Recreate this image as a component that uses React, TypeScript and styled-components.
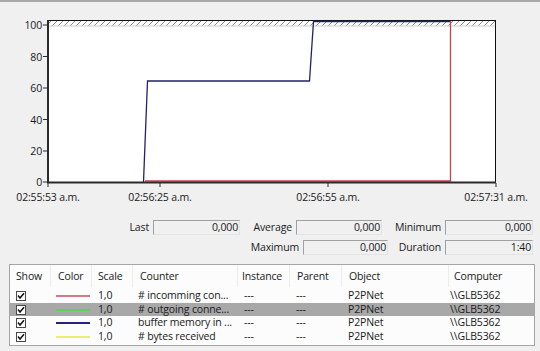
import React from "react";
import styled, { createGlobalStyle } from "styled-components";

const GlobalStyle = createGlobalStyle`
  html, body {
    margin: 0;
    padding: 0;
    background: #f0f0f0;
  }
  body {
    font-family: "Segoe UI", "Open Sans", "Noto Sans", sans-serif;
    font-size: 10.5px;
    letter-spacing: -0.15px;
    color: #1a1a1a;
  }
`;

export const Window = styled.div`
  width: 540px;
  height: 351px;
  box-sizing: border-box;
  border-top: 2px solid #a9a9a9;
  display: flex;
  flex-direction: column;
  overflow: hidden;
`;

export const ChartSvg = styled.svg`
  display: block;
  flex: none;
`;

export const AxisLabel = styled.text`
  font-size: 10.5px;
  letter-spacing: -0.15px;
  fill: #1a1a1a;
`;

export const Stats = styled.div`
  display: flex;
  flex-direction: column;
  gap: 5px;
  margin-top: 10px;
  padding-right: 7px;
`;

export const StatRow = styled.div<{ $cols: string }>`
  display: grid;
  grid-template-columns: ${(p) => p.$cols};
  column-gap: 4px;
  align-items: center;
  height: 15px;
`;

export const StatLabel = styled.span`
  text-align: right;
  white-space: nowrap;
  line-height: 15px;
`;

export const StatBox = styled.span`
  box-sizing: border-box;
  height: 15px;
  line-height: 13px;
  border-top: 1px solid #a0a0a0;
  border-left: 1px solid #a0a0a0;
  border-right: 1px solid #e3e3e3;
  border-bottom: 1px solid #e3e3e3;
  text-align: right;
  padding-right: 1px;
`;

export const Table = styled.div`
  margin: 9px 5px 0 9px;
  height: 82px;
  box-sizing: border-box;
  border: 1px solid #a5a5a5;
  background: #fcfcfc;
  display: flex;
  flex-direction: column;
`;

const COLS = "41px 41px 41px 105px 52px 52px 107px 1fr";

export const HeaderRow = styled.div`
  display: grid;
  grid-template-columns: ${COLS};
  height: 22px;
  align-items: center;
  margin-bottom: 2px;
`;

export const HeaderCell = styled.span<{ $shift?: number }>`
  padding-left: ${(p) => 6 + (p.$shift ?? 0)}px;
  line-height: 22px;
  border-right: 1px solid #ececec;
  white-space: nowrap;
  &:last-child {
    border-right: none;
  }
`;

export const DataRow = styled.div<{ $selected?: boolean }>`
  display: grid;
  grid-template-columns: ${COLS};
  height: 13.6px;
  line-height: 13.6px;
  align-items: center;
  background: ${(p) => (p.$selected ? "#a8a8a8" : "transparent")};
`;

export const Cell = styled.span<{ $shift?: number }>`
  padding-left: ${(p) => 5 + (p.$shift ?? 0)}px;
  white-space: nowrap;
`;

export const CheckBox = styled.span`
  display: inline-flex;
  box-sizing: border-box;
  width: 10px;
  height: 10px;
  margin-left: 1px;
  border: 1px solid #4a4a4a;
  background: #fff;
  vertical-align: middle;
`;

export const Swatch = styled.span<{ $color: string }>`
  display: block;
  width: 34px;
  height: 2px;
  background: ${(p) => p.$color};
  margin-top: 1px;
`;

const Check = () => (
  <CheckBox>
    <svg width="8" height="8" viewBox="0 0 8 8">
      <path d="M1 3.6 L3 6 L7 1.2" fill="none" stroke="#111" strokeWidth="1.5" />
    </svg>
  </CheckBox>
);

const yTicks = [
  { v: "100", y: 25 },
  { v: "80", y: 56.5 },
  { v: "60", y: 88 },
  { v: "40", y: 119.5 },
  { v: "20", y: 151 },
  { v: "0", y: 182 },
];

const xTicks = [
  { t: "02:55:53 a.m.", x: 48 },
  { t: "02:56:25 a.m.", x: 160 },
  { t: "02:56:55 a.m.", x: 328 },
  { t: "02:57:31 a.m.", x: 496 },
];

const Chart = () => (
  <ChartSvg width={540} height={208} viewBox="0 2 540 208">
    <defs>
      <pattern id="hatch" width="6" height="6" patternUnits="userSpaceOnUse">
        <path d="M-1 7 L7 -1" stroke="#8a8a8a" strokeWidth="1" />
      </pattern>
    </defs>
    <rect x={48} y={20} width={447} height={162} fill="#fff" />
    <rect x={48} y={20.5} width={447} height={5.5} fill="url(#hatch)" />
    <line x1={48} y1={26} x2={495} y2={26} stroke="#d0d0d0" />
    <line x1={48} y1={20.5} x2={495.5} y2={20.5} stroke="#111" />
    <line x1={495.5} y1={20} x2={495.5} y2={182} stroke="#111" />

    <polyline points="143.5,182 147.5,81 309.5,81 313.5,21.5 451,21.5" fill="none" stroke="#22226e" strokeWidth="1.3" />
    <polyline points="440,181.5 450,181.5" fill="none" stroke="#8fd88f" strokeWidth="1.3" />
    <polyline points="145,181 450.5,181 450.5,21" fill="none" stroke="#c4444f" strokeWidth="1.3" />

    <line x1={48} y1={20} x2={48} y2={183} stroke="#2a2a2a" strokeWidth="2" />
    <line x1={47} y1={182.5} x2={496} y2={182.5} stroke="#2a2a2a" strokeWidth="2" />

    {yTicks.map((t) => (
      <g key={t.v}>
        <line x1={43} y1={t.y} x2={48} y2={t.y} stroke="#2a2a2a" />
        <AxisLabel x={42} y={t.y} textAnchor="end" dominantBaseline="central">
          {t.v}
        </AxisLabel>
      </g>
    ))}
    {xTicks.map((t) => (
      <g key={t.t}>
        <line x1={t.x} y1={183} x2={t.x} y2={187} stroke="#2a2a2a" />
        <AxisLabel x={t.x} y={197} textAnchor="middle" dominantBaseline="central">
          {t.t}
        </AxisLabel>
      </g>
    ))}
  </ChartSvg>
);

const counters = [
  { color: "#d47a86", counter: "# incomming con...", selected: false },
  { color: "#5fcf5f", counter: "# outgoing conne...", selected: true },
  { color: "#24247e", counter: "buffer memory in ...", selected: false },
  { color: "#e8ee70", counter: "# bytes received", selected: false },
];

const App = () => {
  return (
    <>
      <GlobalStyle />
      <Window>
        <Chart />

        <Stats>
          <StatRow $cols="1fr 87px 48px 86px 55px 88px">
            <StatLabel>Last</StatLabel>
            <StatBox>0,000</StatBox>
            <StatLabel>Average</StatLabel>
            <StatBox>0,000</StatBox>
            <StatLabel>Minimum</StatLabel>
            <StatBox>0,000</StatBox>
          </StatRow>
          <StatRow $cols="1fr 85px 49px 88px">
            <StatLabel>Maximum</StatLabel>
            <StatBox>0,000</StatBox>
            <StatLabel>Duration</StatLabel>
            <StatBox>1:40</StatBox>
          </StatRow>
        </Stats>

        <Table>
          <HeaderRow>
            <HeaderCell>Show</HeaderCell>
            <HeaderCell $shift={1}>Color</HeaderCell>
            <HeaderCell>Scale</HeaderCell>
            <HeaderCell $shift={1}>Counter</HeaderCell>
            <HeaderCell $shift={-2}>Instance</HeaderCell>
            <HeaderCell $shift={1}>Parent</HeaderCell>
            <HeaderCell $shift={1}>Object</HeaderCell>
            <HeaderCell $shift={-1}>Computer</HeaderCell>
          </HeaderRow>
          {counters.map((c) => (
            <DataRow key={c.counter} $selected={c.selected}>
              <Cell>
                <Check />
              </Cell>
              <Cell>
                <Swatch $color={c.color} />
              </Cell>
              <Cell $shift={1}>1,0</Cell>
              <Cell>{c.counter}</Cell>
              <Cell $shift={1}>---</Cell>
              <Cell $shift={1}>---</Cell>
              <Cell $shift={1}>P2PNet</Cell>
              <Cell $shift={-4}>\\GLB5362</Cell>
            </DataRow>
          ))}
        </Table>
      </Window>
    </>
  );
};

export default App;
